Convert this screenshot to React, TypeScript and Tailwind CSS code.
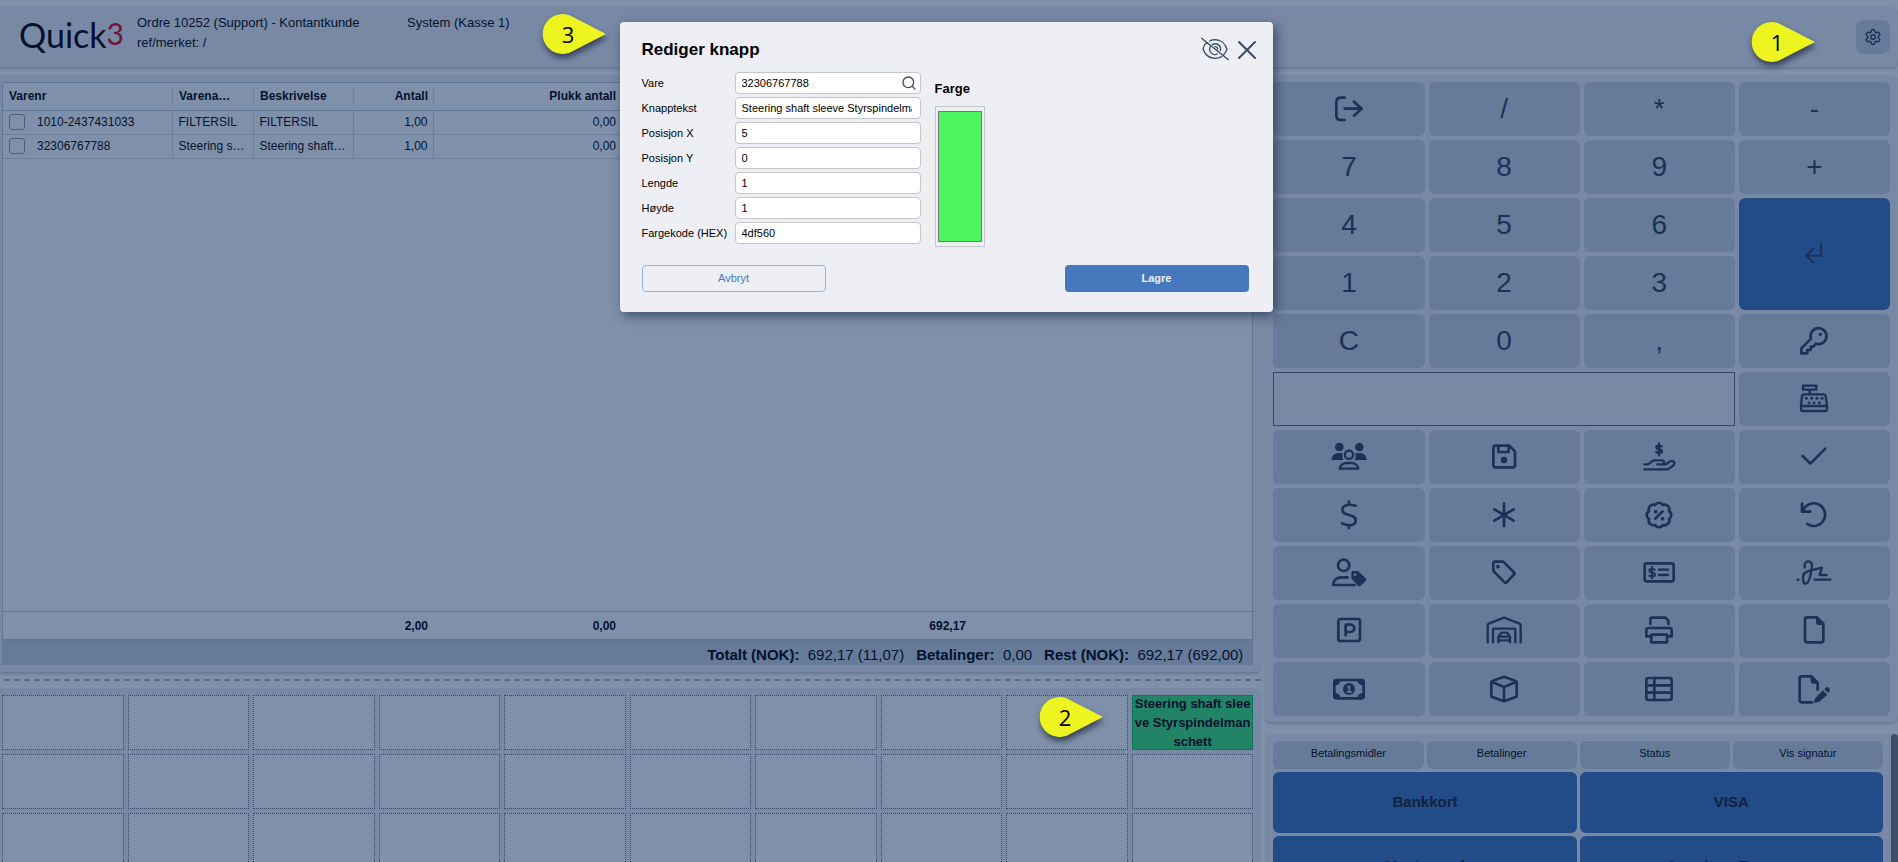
import type { ReactNode } from "react";
import { Search, Settings } from "lucide-react";

/* All POS icons share one canvas, 3 units = 1px, origin in the middle */
function Icon({ children, stroke = 8 }: { children: ReactNode; stroke?: number }) {
  return (
    <svg
      viewBox="-54 -54 108 108"
      className="w-9 h-9"
      fill="none"
      stroke="currentColor"
      strokeWidth={stroke}
      strokeLinecap="round"
      strokeLinejoin="round"
      aria-hidden="true"
    >
      {children}
    </svg>
  );
}

const solid = { fill: "currentColor", stroke: "none" };

const icons: Record<string, ReactNode> = {
  logout: <Icon><path d="M-13 -34H-25Q-38 -34 -38 -21V20Q-38 33 -25 33H-13M-13 -1H38M15 -22 38 -1 15 20" /></Icon>,
  enter: <Icon stroke={6}><path strokeLinecap="butt" strokeLinejoin="miter" d="M22 -34V5H-22M0 -18 -23 5 0 28" /></Icon>,
  key: (
    <Icon>
      <path d="M-9 -7-38 22V37H-20V27H-10V17H-2L6 8A24 24 0 1 0 -9 -7Z" />
      <circle cx="19" cy="-20" r="5" {...solid} />
    </Icon>
  ),
  register: (
    <Icon stroke={7}>
      <path d="M-33 -40H7V-28H-33ZM-13 -28V-14M-31 -14H30Q34 -14 35 -9L39 20V31Q39 36 34 36H-34Q-39 36-39 31V20L-36 -9Q-35 -14-31 -14ZM-39 21H39" />
      <g {...solid}>
        {[-23, -7, 9, 24].map(x => <circle key={x} cx={x} cy="-2" r="4.5" />)}
        {[-15, 0, 16].map(x => <circle key={x} cx={x} cy="11" r="4.5" />)}
      </g>
    </Icon>
  ),
  users: (
    <Icon stroke={7}>
      <g {...solid}>
        <circle cx="-29" cy="-30" r="13" />
        <circle cx="31" cy="-30" r="13" />
        <path d="M-52 9C-52 -3-44 -12-32 -12H-24Q-21 -12-19 -11Q-22 0-17 9Z" />
        <path d="M53 9C53 -3 45 -12 33 -12H24Q21 -12 19 -11Q22 0 17 9Z" />
      </g>
      <circle cx="0" cy="-7" r="12.5" />
      <path d="M-28 35A22 18 0 0 1-6 18H6A22 18 0 0 1 28 35Z" />
    </Icon>
  ),
  floppy: (
    <Icon>
      <path d="M-25 -34H13Q16 -34 18 -32L31 -19Q33 -17 33 -14V24Q33 31 26 31H-25Q-32 31-32 24V-27Q-32 -34-25 -34ZM-17 -34V-15H14V-34" />
      <circle cx="0" cy="9" r="10" {...solid} />
    </Icon>
  ),
  handDollar: (
    <Icon stroke={7}>
      <path d="M0 -41V-5M8 -32C2 -35-8 -35-8 -29C-8 -22 9 -25 9 -17C9 -11-2 -11-8 -15" />
      <path d="M-44 37H22Q27 37 31 34L43 25C50 19 43 8 34 13L20 22H-5M-44 22H-36Q-31 22-27 18L-23 14Q-19 10-13 10H8Q15 10 15 16Q15 22 8 22" />
    </Icon>
  ),
  check: <Icon><path d="M-34 -3-11 20 34 -25" /></Icon>,
  dollar: <Icon><path d="M0 -40V-30M0 31V39M20 -28C8 -32-20 -34-20 -15C-20 5 20 -5 20 16C20 35-5 33-21 25" /></Icon>,
  asterisk: <Icon><path d="M0 -34V34M-29 -17 29 17M-29 17 29 -17" /></Icon>,
  badge: (
    <Icon>
      <path d="M30 -12A14 14 0 0 1 30 12A14 14 0 0 1 12 30A14 14 0 0 1-12 30A14 14 0 0 1-30 12A14 14 0 0 1-30 -12A14 14 0 0 1-12 -30A14 14 0 0 1 12 -30A14 14 0 0 1 30 -12Z" />
      <path d="M11 -11-11 11" />
      <circle cx="-10" cy="-10" r="5.5" {...solid} />
      <circle cx="11" cy="11" r="5.5" {...solid} />
    </Icon>
  ),
  undo: <Icon><path d="M-36 -34V-10H-11M-33 -12A34 34 0 1 1-20 27" /></Icon>,
  userTag: (
    <Icon>
      <circle cx="-16" cy="-23" r="17" />
      <path d="M17 36H-48C-47 22-37 13-22 13H-4" />
      <path {...solid} fillRule="evenodd" d="M12 -6H25Q28 -6 30 -4L50 16Q54 20 50 24L35 38Q31 41 27 38L9 19Q7 17 7 14V-1Q7 -6 12 -6ZM18 1A4 4 0 1 0 18 9A4 4 0 1 0 18 1Z" />
    </Icon>
  ),
  tag: (
    <Icon>
      <path d="M-27 -34H-5Q-2 -34 0 -32L30 -2Q33 1 30 4L8 28Q5 31 2 28L-30 -4Q-32 -6-32 -9V-29Q-32 -34-27 -34Z" />
      <circle cx="-18" cy="-19" r="5.5" {...solid} />
    </Icon>
  ),
  moneyCheck: (
    <Icon>
      <rect x="-43" y="-29" width="87" height="54" rx="6" />
      <path strokeWidth={6} d="M-21 -19V16M-13 -10C-19 -13-29 -13-29 -7C-29 0-12 -4-12 5C-12 11-22 12-29 8" />
      <path strokeWidth={7} d="M0 -10H27M0 6H27" />
    </Icon>
  ),
  signature: (
    <Icon stroke={7}>
      <path d="M-28 -17V-22C-28 -39-5 -39-6 -22C-7 -5-14 32-25 32C-33 32-33 22-33 12C-33 -5-12 -7 24 -16L17 6H38M2 20H49" />
      <circle cx="-48" cy="20" r="4.5" {...solid} />
    </Icon>
  ),
  parking: (
    <Icon>
      <rect x="-32" y="-36" width="65" height="66" rx="7" />
      <path d="M-10 13V-19H5A11 11 0 0 1 5 3H-10" />
    </Icon>
  ),
  warehouse: (
    <Icon stroke={7}>
      <path d="M-49 34V-16Q-49 -21-44 -23L0 -40 45 -23Q50 -21 50 -16V34M-33 34V-4Q-33 -7-30 -7H31Q34 -7 34 -4V34" />
      <path d="M-17 34V18L-10 7Q-9 5-6 5H7Q10 5 11 7L18 18V34M-15 17H16M-17 28H18" />
    </Icon>
  ),
  printer: (
    <Icon>
      <path d="M-26 -21V-34Q-26 -40-20 -40H19L28 -31V-21M-26 16H-38V-2Q-38 -9-31 -9H31Q38 -9 38 -2V16H27M-23 11H24V34H-23Z" />
    </Icon>
  ),
  file: (
    <Icon>
      <path d="M-20 -41H9L28 -22V28Q28 34 22 34H-20Q-27 34-27 28V-35Q-27 -41-20 -41Z" />
      <path {...solid} d="M6 -41 29 -18H13Q6 -18 6 -25Z" />
    </Icon>
  ),
  bill: (
    <Icon>
      <rect x="-44" y="-27" width="88" height="55" rx="6" />
      <path {...solid} d="M-44 -27H-25A19 17 0 0 1-44 -10ZM44 -27H25A19 17 0 0 0 44 -10ZM-44 28H-25A19 17 0 0 0-44 11ZM44 28H25A19 17 0 0 1 44 11Z" />
      <circle cx="0" cy="0" r="18" {...solid} />
      <path className="stroke-[#667b99]" strokeWidth={5} d="M-3 -7H1V8M-5 9H7" />
    </Icon>
  ),
  box: <Icon><path d="M0 -37 35 -24Q38 -23 38 -20V20Q38 23 35 24L0 37-35 24Q-38 23-38 20V-20Q-38 -23-35 -24ZM-36 -21 0 -6 36 -21M0 -6V36" /></Icon>,
  table: (
    <Icon>
      <rect x="-38" y="-33" width="76" height="66" rx="6" />
      <path d="M-38 -11H38M-38 11H38M-14 -33V33" />
    </Icon>
  ),
  filePen: (
    <Icon>
      <path d="M-6 40H-36Q-43 40-43 33V-32Q-43 -38-36 -38H-8L11 -19V2" />
      <path {...solid} d="M-10 -38 13 -16H-3Q-10 -16-10 -23ZM-1 42 4 27 27 4 40 17 16 38ZM31 0 35 -4Q40 -8 45 -3Q50 2 46 8L43 12Z" />
    </Icon>
  ),
};

type Key = { id: string; label: string; icon?: boolean };

const k = (id: string): Key => ({ id, label: id });
const i = (id: string, label: string): Key => ({ id, label, icon: true });

const keysTop: Key[] = [
  i("logout", "Logg ut"), k("/"), k("*"), k("-"),
  k("7"), k("8"), k("9"), k("+"),
  k("4"), k("5"), k("6"), i("enter", "Enter"),
  k("1"), k("2"), k("3"),
  k("C"), k("0"), k(","), i("key", "Nøkkel"),
];

const keysBottom: Key[] = [
  i("register", "Kasse"),
  i("users", "Kunder"), i("floppy", "Lagre ordre"), i("handDollar", "Innbetaling"), i("check", "Godkjenn"),
  i("dollar", "Pris"), i("asterisk", "Antall"), i("badge", "Rabatt"), i("undo", "Angre"),
  i("userTag", "Kundepris"), i("tag", "Etikett"), i("moneyCheck", "Sjekk"), i("signature", "Signatur"),
  i("parking", "Parker"), i("warehouse", "Lager"), i("printer", "Skriv ut"), i("file", "Ny ordre"),
  i("bill", "Kontant"), i("box", "Vare"), i("table", "Liste"), i("filePen", "Rediger ordre"),
];

const rows = [
  { nr: "1010-2437431033", name: "FILTERSIL", text: "FILTERSIL" },
  { nr: "32306767788", name: "Steering shaft sleeve", text: "Steering shaft sleeve" },
];

const fields = [
  { id: "vare", label: "Vare", value: "32306767788" },
  { id: "knapptekst", label: "Knapptekst", value: "Steering shaft sleeve Styrspindelmanschett" },
  { id: "posx", label: "Posisjon X", value: "5" },
  { id: "posy", label: "Posisjon Y", value: "0" },
  { id: "lengde", label: "Lengde", value: "1" },
  { id: "hoyde", label: "Høyde", value: "1" },
  { id: "hex", label: "Fargekode (HEX)", value: "4df560" },
];

function KeyButton({ item }: { item: Key }) {
  const enter = item.id === "enter";
  return (
    <button
      aria-label={item.label}
      className={`flex items-center justify-center rounded-md text-[28px] leading-none text-[#1b3157] ${enter ? "row-span-2 bg-[#224c87]" : "bg-[#667b99]"}`}
    >
      {item.icon ? icons[item.id] : item.label}
    </button>
  );
}

function OrderTable() {
  return (
    <div className="flex-1 min-h-0 flex flex-col bg-[#7889a5] rounded-r-md pt-[7px] pb-[7px] pl-[2px] pr-2 shadow-[0_2px_3px_rgba(70,90,125,0.45)]">
      <div className="flex-1 min-h-0 flex flex-col bg-[#7f91aa] border border-b-2 border-[#5f7594] rounded-t-[2px] text-xs text-[#04112e]">
        <table className="w-full table-fixed border-collapse">
          <colgroup>
            <col className="w-[169px]" />
            <col className="w-[81px]" />
            <col className="w-[100px]" />
            <col className="w-[80px]" />
            <col className="w-[188px]" />
            <col className="w-[350px]" />
            <col />
          </colgroup>
          <thead>
            <tr className="h-[27px] border-b border-[#5f7594] text-left">
              <th className="pl-1.5">Varenr</th>
              <th className="p-0"><div className="h-3.5 border-l border-[#6b7f9b] pl-1.5 leading-[14px]">Varena…</div></th>
              <th className="p-0"><div className="h-3.5 border-l border-[#6b7f9b] pl-1.5 leading-[14px]">Beskrivelse</div></th>
              <th className="p-0 text-right"><div className="h-3.5 border-l border-[#6b7f9b] pr-[5px] leading-[14px]">Antall</div></th>
              <th className="p-0 text-right"><div className="h-3.5 border-l border-[#6b7f9b] pr-[5px] leading-[14px]">Plukk antall</div></th>
              <th />
              <th />
            </tr>
          </thead>
          <tbody>
            {rows.map(r => (
              <tr key={r.nr} className="h-6 border-b border-[#6b7f9b]">
                <td className="pl-1.5">
                  <label className="flex items-center gap-3">
                    <input type="checkbox" className="appearance-none w-4 h-4 rounded-[3px] border border-[#4a5f80]" />
                    {r.nr}
                  </label>
                </td>
                <td className="border-l border-[#6b7f9b] px-1.5 truncate">{r.name}</td>
                <td className="border-l border-[#6b7f9b] px-1.5 truncate">{r.text}</td>
                <td className="border-l border-[#6b7f9b] px-[5px] text-right">1,00</td>
                <td className="border-l border-[#6b7f9b] px-[5px] text-right">0,00</td>
                <td />
                <td />
              </tr>
            ))}
          </tbody>
        </table>
        <div className="mt-auto flex h-7 items-center border-t border-[#5f7594] font-bold text-right">
          <span className="w-[425px]">2,00</span>
          <span className="w-[188px]">0,00</span>
          <span className="w-[350px]">692,17</span>
        </div>
      </div>
      <div className="flex h-6 items-center justify-end gap-3 bg-[#667b99] pt-1 pr-2.5 text-[15px] text-[#04112e]">
        <span><b>Totalt (NOK):</b>&nbsp; 692,17 (11,07)</span>
        <span><b>Betalinger:</b>&nbsp; 0,00</span>
        <span><b>Rest (NOK):</b>&nbsp; 692,17 (692,00)</span>
      </div>
    </div>
  );
}

function ButtonGrid() {
  return (
    <div className="h-[174px] overflow-hidden rounded-tr-md bg-[#7889a5] pt-[7px] pl-[2px] pr-2">
      <div className="grid grid-cols-10 auto-rows-[55px] gap-1">
        {Array.from({ length: 30 }, (_, n) =>
          n === 9 ? (
            <button key={n} className="flex items-center justify-center border border-dotted border-[#33476a] bg-[#228467] text-[13px] leading-[19px] font-bold text-[#04112e]">
              <span className="break-all">Steering shaft sleeve Styrspindelmanschett</span>
            </button>
          ) : (
            <button key={n} aria-label={`Tom knapp ${n + 1}`} className="border border-dotted border-[#33476a] bg-[#7f91aa]" />
          )
        )}
      </div>
    </div>
  );
}

function Payments() {
  return (
    <div className="flex-1 min-h-0 flex overflow-hidden rounded-tl-md bg-[#7889a5]">
      <div className="flex-1 pt-[7px] pl-2 pr-2">
        <div className="grid grid-cols-4 gap-[3px] text-[11px] text-[#04112e]">
          {["Betalingsmidler", "Betalinger", "Status", "Vis signatur"].map(t => (
            <button key={t} className="h-7 rounded-md bg-[#667b99] pb-1">{t}</button>
          ))}
        </div>
        <div className="mt-[3px] grid grid-cols-2 gap-[3px] text-[15px] font-bold text-[#11233f]">
          {["Bankkort", "VISA", "Mastercard", "American Express"].map(t => (
            <button key={t} className="h-[61px] rounded-md bg-[#224c87]">{t}</button>
          ))}
        </div>
      </div>
      <div className="w-[7px] rounded-t-full bg-[#3d4e6a]" />
    </div>
  );
}

function Dialog() {
  return (
    <div className="absolute inset-0 flex items-start justify-center pt-[22px] pr-1.5">
      <div role="dialog" aria-labelledby="dialog-title" className="w-[653px] rounded bg-[#eeeff4] pl-[22px] pr-6 pb-5 text-[11px] text-black shadow-[3px_4px_12px_rgba(20,35,65,0.6)]">
        <div className="-mr-2.5 flex h-[50px] items-center">
          <h2 id="dialog-title" className="flex-1 pt-1.5 text-[17px] font-bold">Rediger knapp</h2>
          <button aria-label="Skjul" className="pt-1">
            <svg viewBox="23 38 96 96" className="w-8 h-8" fill="none" stroke="#3a4a66" strokeWidth="4" strokeLinecap="round" aria-hidden="true">
              <path d="M31 54 111 118M45 66C39 73 36 79 35 86C42 105 57 114 72 114C80 114 86 112 91 109M55 62C60 59 66 58 72 58C88 59 102 70 107 86C105 93 101 99 97 103" />
              <path d="M57 79A16 16 0 0 0 78 101M63 73A16 16 0 0 1 87 91M71 79A8 8 0 0 1 79 86" />
            </svg>
          </button>
          <button aria-label="Lukk" className="pt-1.5 pl-1">
            <svg viewBox="0 0 24 24" className="w-6 h-6" fill="none" stroke="#3a4a66" strokeWidth="2" strokeLinecap="round" aria-hidden="true">
              <path d="M4 4 20 20M20 4 4 20" />
            </svg>
          </button>
        </div>
        <div className="flex gap-3.5">
          <div className="flex flex-col gap-[3px]">
            {fields.map(f => (
              <div key={f.id} className="flex h-[22px] items-center">
                <label htmlFor={f.id} className="w-[93px] whitespace-nowrap">{f.label}</label>
                <div className="relative">
                  <input id={f.id} defaultValue={f.value} className="block h-[22px] w-[186px] rounded border border-[#c6c6c9] bg-white pl-1.5 pr-2" />
                  {f.id === "vare" && (
                    <button aria-label="Søk" className="absolute right-1 top-[3px]">
                      <Search className="w-4 h-4 text-[#3a4a66]" strokeWidth={2} />
                    </button>
                  )}
                </div>
              </div>
            ))}
          </div>
          <div>
            <div className="mt-2 mb-2 text-[13px] leading-[18px] font-bold">Farge</div>
            <div className="h-[141px] w-[50px] border border-[#c6c6c9] px-[2px] py-1">
              <div className="h-full border border-[#6f7a78] bg-[#4df560]" />
            </div>
          </div>
        </div>
        <div className="mt-[18px] flex justify-between">
          <button className="h-[27px] w-[184px] rounded border border-[#8fb5ee] text-[#4678be]">Avbryt</button>
          <button className="h-[27px] w-[184px] rounded bg-[#4678be] font-bold text-[#eeeff4]">Lagre</button>
        </div>
      </div>
    </div>
  );
}

/* Numbered teardrop callout, placed over the page by its parent */
function Callout({ n, className }: { n: number; className: string }) {
  return (
    <div className={`absolute h-10 w-[63px] ${className}`}>
      <svg viewBox="0 0 63 40" className="absolute inset-0 h-10 w-[63px] overflow-visible drop-shadow-[1px_4px_3px_rgba(20,30,50,0.7)]" aria-hidden="true">
        <path fill="#eef420" d="M63 20 31 3.5A20 20 0 1 0 31 36.5Z" />
      </svg>
      <span className="relative block w-[50px] text-center font-['Open_Sans',sans-serif] text-[22px] leading-10 text-black">{n}</span>
    </div>
  );
}

export default function App() {
  return (
    <div className="relative flex h-screen flex-col overflow-hidden bg-[#7f91aa] pt-[7px] font-['Liberation_Sans',Arial,sans-serif]">
      <header className="flex h-[60px] shrink-0 items-start rounded-r-md bg-[#7889a5] pl-[19px] pr-2 text-[13px] leading-5 text-[#04112e] shadow-[0_2px_3px_rgba(70,90,125,0.45)]">
        <div className="flex w-[118px] items-start pt-2.5 font-['Lato',sans-serif] leading-9">
          <span className="text-[34px]">Quick</span>
          <span className="text-[30px] leading-8 text-[#6e1538]">3</span>
        </div>
        <div className="w-[270px] pt-1.5">
          <div>Ordre 10252 (Support) - Kontantkunde</div>
          <div>ref/merket: /</div>
        </div>
        <div className="flex-1 pt-1.5">System (Kasse 1)</div>
        <button aria-label="Innstillinger" className="mt-[13px] flex h-[34px] w-[34px] items-center justify-center rounded-lg bg-[#667b99]">
          <Settings className="h-[18px] w-[18px] text-[#1b3157]" />
        </button>
      </header>

      <main className="mt-2 flex min-h-0 flex-1 gap-1">
        <section className="flex min-w-0 flex-1 flex-col">
          <OrderTable />
          <div className="ml-1 mt-[7px] mb-[7px] border-b-2 border-dashed border-[#596b89]" />
          <ButtonGrid />
        </section>

        <section className="flex w-1/3 flex-col">
          <div className="mb-3 grid grid-cols-4 auto-rows-[54px] gap-1 rounded-md bg-[#7889a5] px-2 pt-[7px] pb-1.5 shadow-[0_2px_3px_rgba(70,90,125,0.45)]">
            {keysTop.map(item => <KeyButton key={item.id} item={item} />)}
            <input aria-label="Inntasting" className="col-span-3 border border-[#33476a] px-3 text-[28px] text-[#1b3157]" />
            {keysBottom.map(item => <KeyButton key={item.id} item={item} />)}
          </div>
          <Payments />
        </section>
      </main>

      <Dialog />
      <Callout n={1} className="right-[83px] top-[22px]" />
      <Callout n={2} className="left-[1040px] top-[697px]" />
      <Callout n={3} className="left-[543px] top-[14px]" />
    </div>
  );
}
